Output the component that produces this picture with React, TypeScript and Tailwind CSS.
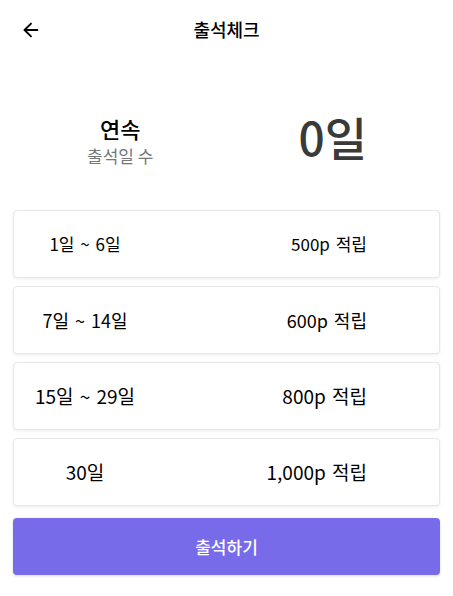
import { ArrowLeft } from 'lucide-react'

const REWARDS = [
  { range: '1일 ~ 6일', point: '500p 적립', size: 'text-[17px]' },
  { range: '7일 ~ 14일', point: '600p 적립', size: 'text-[18px]' },
  { range: '15일 ~ 29일', point: '800p 적립', size: 'text-[19px]' },
  { range: '30일', point: '1,000p 적립', size: 'text-[19px]' },
]

export default function App() {
  return (
    <div
      className="min-h-[596px] bg-white text-black"
      style={{ fontFamily: '"Noto Sans CJK KR", "Noto Sans", sans-serif' }}
    >
      <header className="relative flex h-[58px] items-center justify-center">
        <button className="absolute left-[18px] top-[17px] p-0.5" aria-label="뒤로">
          <ArrowLeft className="h-[22px] w-[22px]" strokeWidth={2} />
        </button>
        <h1 className="text-[18px] font-medium leading-none">출석체크</h1>
      </header>

      <section className="grid h-[152px] grid-cols-2 items-center px-[14px] pt-[4px]">
        <div className="flex flex-col items-center pt-[10px]">
          <p className="text-[22px] font-medium leading-[30px]">연속</p>
          <p className="text-[17px] leading-[26px] text-[#777]">출석일 수</p>
        </div>
        <div className="flex justify-center">
          <p className="text-[46px] font-medium leading-none text-[#3a3a3a]">0일</p>
        </div>
      </section>

      <div className="flex flex-col gap-2 px-[13px]">
        {REWARDS.map((r) => (
          <div
            key={r.range}
            className={`flex h-[68px] items-center rounded-[4px] border border-[#e8e8e8] bg-white [word-spacing:2px] shadow-[0_1px_3px_rgba(0,0,0,0.08)] ${r.size}`}
          >
            <div className="w-[142px] text-center">{r.range}</div>
            <div className="flex-1 pr-[72px] text-right">{r.point}</div>
          </div>
        ))}
        <button className="mt-1 h-[57px] rounded-[4px] bg-[#776be9] text-[17px] font-medium text-white shadow-[0_1px_3px_rgba(0,0,0,0.15)]">
          출석하기
        </button>
      </div>
    </div>
  )
}
